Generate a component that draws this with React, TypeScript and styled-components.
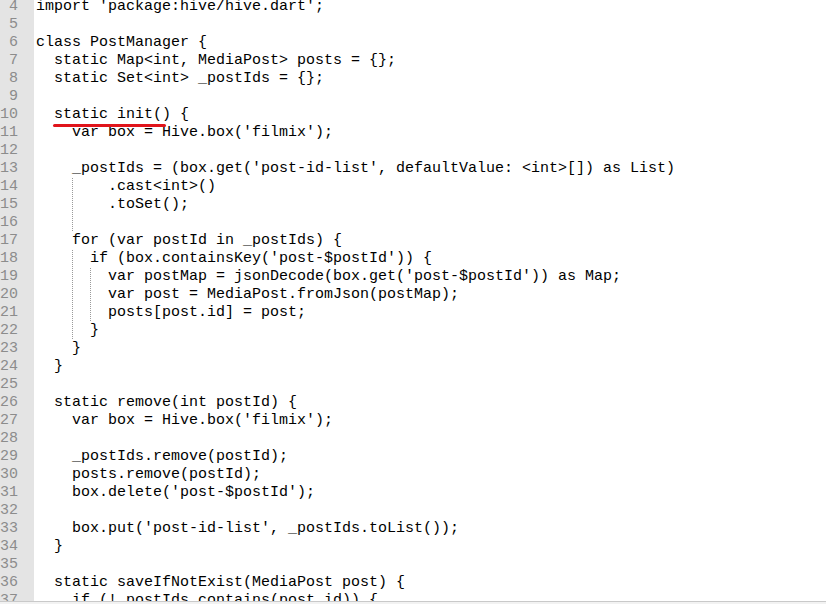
import styled, { createGlobalStyle } from "styled-components";

const GlobalStyle = createGlobalStyle`
  html, body {
    margin: 0;
    padding: 0;
    background: #ffffff;
  }
  body {
    width: 826px;
    height: 604px;
    overflow: hidden;
  }
`;

const CODE_FONT = `"Liberation Mono", "Courier New", monospace`;
const CHAR_W = 9;
const TEXT_LEFT = 2;

const Window = styled.div`
  display: flex;
  flex-direction: column;
  width: 826px;
  height: 604px;
  background: #ffffff;
`;

const Editor = styled.div`
  flex: 0 0 601px;
  overflow: hidden;
  border-bottom: 1px solid #c9c9c9;
`;

const Lines = styled.div`
  display: flex;
  flex-direction: column;
  margin-top: -2px;
`;

const Row = styled.div`
  display: grid;
  grid-template-columns: 34px 1fr;
  height: 18px;
  font-family: ${CODE_FONT};
  font-size: 15px;
  line-height: 18px;
`;

const LineNo = styled.div`
  background: #e4e4e4;
  color: #8c8c8c;
  text-align: right;
  padding-right: 16px;
  white-space: pre;
`;

// indent guides are drawn as dotted backgrounds at each guide column
const Code = styled.div<{ guides: number[] }>`
  padding-left: ${TEXT_LEFT}px;
  color: #000000;
  white-space: pre;
  background-image: ${({ guides }) =>
    guides.length
      ? guides
          .map(() => "linear-gradient(to bottom, #9a9a9a 50%, transparent 50%)")
          .join(", ")
      : "none"};
  background-size: 1px 2px;
  background-repeat: repeat-y;
  background-position: ${({ guides }) =>
    guides.map((col) => `${TEXT_LEFT + col * CHAR_W}px 0`).join(", ")};
`;

const Marked = styled.span`
  position: relative;
  &::after {
    content: "";
    position: absolute;
    left: -1px;
    right: 5px;
    bottom: -4px;
    height: 3px;
    border-radius: 2px;
    background: #e0141b;
  }
`;

const ScrollStrip = styled.div`
  flex: 1;
  background: #f2f2f2;
`;

type Line = { n: number; text: string; guides?: number[] };

const lines: Line[] = [
  { n: 4, text: "import 'package:hive/hive.dart';" },
  { n: 5, text: "" },
  { n: 6, text: "class PostManager {" },
  { n: 7, text: "  static Map<int, MediaPost> posts = {};" },
  { n: 8, text: "  static Set<int> _postIds = {};" },
  { n: 9, text: "" },
  { n: 10, text: "  static init() {" },
  { n: 11, text: "    var box = Hive.box('filmix');" },
  { n: 12, text: "" },
  { n: 13, text: "    _postIds = (box.get('post-id-list', defaultValue: <int>[]) as List)" },
  { n: 14, text: "        .cast<int>()", guides: [4] },
  { n: 15, text: "        .toSet();", guides: [4] },
  { n: 16, text: "", guides: [4] },
  { n: 17, text: "    for (var postId in _postIds) {" },
  { n: 18, text: "      if (box.containsKey('post-$postId')) {", guides: [4] },
  { n: 19, text: "        var postMap = jsonDecode(box.get('post-$postId')) as Map;", guides: [4, 6] },
  { n: 20, text: "        var post = MediaPost.fromJson(postMap);", guides: [4, 6] },
  { n: 21, text: "        posts[post.id] = post;", guides: [4, 6] },
  { n: 22, text: "      }", guides: [4] },
  { n: 23, text: "    }" },
  { n: 24, text: "  }" },
  { n: 25, text: "" },
  { n: 26, text: "  static remove(int postId) {" },
  { n: 27, text: "    var box = Hive.box('filmix');" },
  { n: 28, text: "" },
  { n: 29, text: "    _postIds.remove(postId);" },
  { n: 30, text: "    posts.remove(postId);" },
  { n: 31, text: "    box.delete('post-$postId');" },
  { n: 32, text: "" },
  { n: 33, text: "    box.put('post-id-list', _postIds.toList());" },
  { n: 34, text: "  }" },
  { n: 35, text: "" },
  { n: 36, text: "  static saveIfNotExist(MediaPost post) {" },
  { n: 37, text: "    if (!_postIds.contains(post.id)) {" },
];

function renderCode(line: Line) {
  if (line.n === 10) {
    return (
      <>
        {"  "}
        <Marked>static init()</Marked>
        {" {"}
      </>
    );
  }
  return line.text;
}

export default function App() {
  return (
    <Window>
      <GlobalStyle />
      <Editor>
        <Lines>
          {lines.map((line) => (
            <Row key={line.n}>
              <LineNo>{line.n}</LineNo>
              <Code guides={line.guides ?? []}>{renderCode(line)}</Code>
            </Row>
          ))}
        </Lines>
      </Editor>
      <ScrollStrip />
    </Window>
  );
}
